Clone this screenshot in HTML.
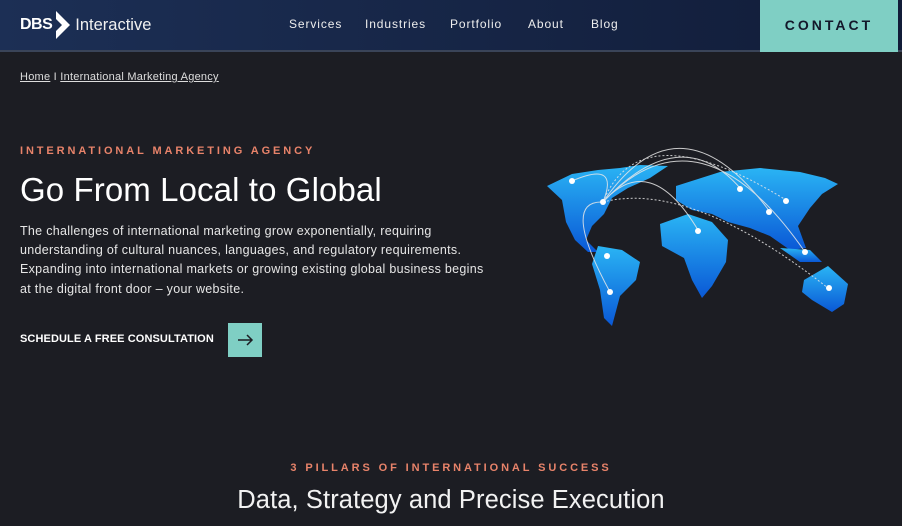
<!DOCTYPE html>
<html><head><meta charset="utf-8"><style>
*{margin:0;padding:0;box-sizing:border-box}
body{width:902px;height:526px;overflow:hidden;background:#1c1d23;font-family:"Liberation Sans",sans-serif;color:#fff;position:relative}
.hdr{position:absolute;left:0;top:0;width:902px;height:52px;background:linear-gradient(90deg,#1c2f55,#111c38);border-bottom:2px solid #3a4458}
.logo{position:absolute;left:20px;top:10px;font-size:16px;display:flex;align-items:center}
.logo b{font-weight:bold;letter-spacing:-0.5px}
.logo span{font-size:16.5px;margin-left:3px;color:#f0f0f0}
.nav{position:absolute;top:17px;font-size:12px;letter-spacing:0.9px;color:#eee}
.contact{position:absolute;left:760px;top:0;width:138px;height:52px;background:#7fcfc4;color:#13172a;font-weight:bold;font-size:14px;letter-spacing:3px;text-align:center;line-height:50px}
.bc{position:absolute;left:20px;top:71px;font-size:11px;letter-spacing:0.25px;color:#ddd}
.eyebrow{position:absolute;color:#e8836a;font-weight:bold;font-size:11px;letter-spacing:2.9px}
h1{position:absolute;left:20px;top:171px;font-weight:normal;font-size:33px;letter-spacing:0.1px;color:#fff}
.p{position:absolute;left:20px;top:222px;width:478px;font-size:12.5px;letter-spacing:0.3px;line-height:19.2px;color:#e6e6e6}
.cta{position:absolute;left:20px;top:333px;font-size:11px;font-weight:bold;letter-spacing:0.1px}
.arrow{position:absolute;left:228px;top:323px;width:34px;height:34px;background:#7fcfc4}
h2{position:absolute;left:0;width:902px;text-align:center;top:486px;font-weight:normal;font-size:25.5px;letter-spacing:0.1px;color:#f2f2f2}
</style></head><body>
<div class="hdr">
<div class="logo"><b>DBS</b><svg width="18" height="30" viewBox="0 0 18 30" style="margin-left:2px"><path d="M2 1 L16 15 L2 29 L2 21 L8 15 L2 9Z" fill="#fff"/></svg><span>Interactive</span></div>
<div class="nav" style="left:289px">Services</div>
<div class="nav" style="left:365px">Industries</div>
<div class="nav" style="left:450px">Portfolio</div>
<div class="nav" style="left:528px">About</div>
<div class="nav" style="left:591px">Blog</div>
<div class="contact">CONTACT</div>
</div>
<div class="bc"><u>Home</u> I <u>International Marketing Agency</u></div>
<div class="eyebrow" style="left:20px;top:145px">INTERNATIONAL MARKETING AGENCY</div>
<h1>Go From Local to Global</h1>
<div class="p">The challenges of international marketing grow exponentially, requiring understanding of cultural nuances, languages, and regulatory requirements. Expanding into international markets or growing existing global business begins at the digital front door – your website.</div>
<div class="cta">SCHEDULE A FREE CONSULTATION</div>
<div class="arrow"><svg width="34" height="34"><path d="M10 17H24M19 12L24 17L19 22" stroke="#1c1d23" stroke-width="1.5" fill="none"/></svg></div>
<svg style="position:absolute;left:0;top:0" width="902" height="526">
<defs><linearGradient id="g" x1="0" y1="0" x2="0" y2="1"><stop offset="0" stop-color="#2ab4f4"/><stop offset="1" stop-color="#0a58d6"/></linearGradient></defs>
<g fill="url(#g)">
<path d="M547 186 L572 174 L598 170 L620 168 L640 165 L668 166 L650 178 L628 188 L612 198 L604 214 L592 226 L586 240 L598 252 L588 252 L575 240 L566 222 L562 200 Z"/>
<path d="M598 246 L622 250 L640 262 L636 280 L620 296 L612 326 L604 318 L600 290 L592 264 Z"/>
<path d="M676 186 L720 172 L760 168 L800 172 L825 178 L838 184 L822 194 L810 208 L798 226 L806 248 L790 250 L770 236 L750 228 L728 222 L712 214 L692 210 L676 200 Z"/>
<path d="M660 224 L688 214 L712 222 L728 240 L726 262 L712 286 L702 298 L692 280 L684 258 L662 246 Z"/>
<path d="M804 280 L828 266 L848 284 L844 304 L832 312 L812 300 L802 292 Z"/>
<path d="M780 248 L810 250 L822 262 L800 262 Z"/>
</g>
<g fill="none" stroke="#e8e8e8" stroke-width="1" opacity="0.85">
<path d="M603 202 Q680 90 770 212"/>
<path d="M603 202 Q700 100 805 252"/>
<path d="M603 202 Q680 120 740 188"/>
<path d="M603 202 Q650 150 698 230"/>
<path d="M603 202 Q620 160 572 181"/>
<path d="M603 202 Q560 200 610 292"/>
<path d="M603 202 Q690 180 828 288" stroke-dasharray="2 2"/>
<path d="M603 202 Q640 110 786 200" stroke-dasharray="2 2"/>
</g>
<g fill="#fff">
<circle cx="572" cy="181" r="3"/><circle cx="603" cy="202" r="3"/><circle cx="607" cy="256" r="3"/><circle cx="610" cy="292" r="3"/><circle cx="698" cy="231" r="3"/><circle cx="740" cy="189" r="3"/><circle cx="769" cy="212" r="3"/><circle cx="786" cy="201" r="3"/><circle cx="805" cy="252" r="3"/><circle cx="829" cy="288" r="3"/>
</g></svg>
<div class="eyebrow" style="left:0;width:902px;text-align:center;top:462px;letter-spacing:2.9px">3 PILLARS OF INTERNATIONAL SUCCESS</div>
<h2>Data, Strategy and Precise Execution</h2>
</body></html>
